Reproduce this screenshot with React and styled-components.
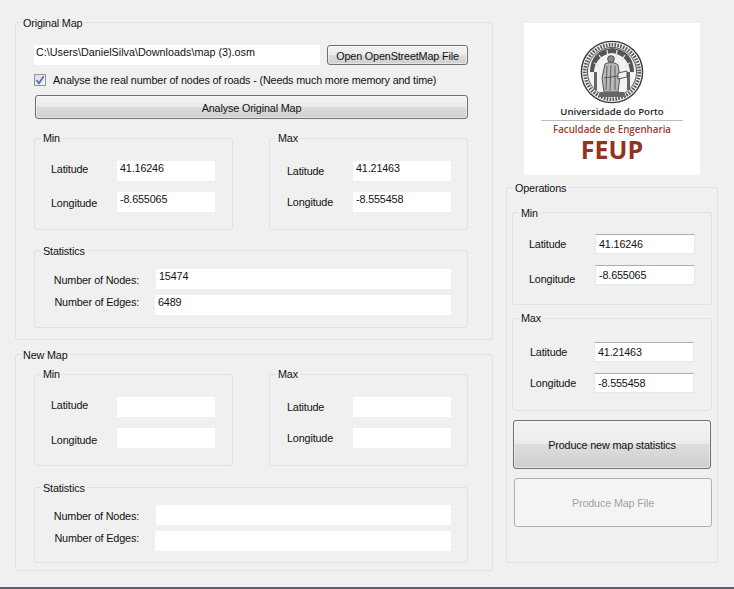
import React from "react";
import styled, { createGlobalStyle } from "styled-components";

const GlobalStyle = createGlobalStyle`
  html, body {
    margin: 0;
    padding: 0;
    background: #f0f0f0;
  }
  * {
    box-sizing: border-box;
  }
`;

const Seal = () => (
  <SealSvg viewBox="0 0 64 64">
    <circle cx="32" cy="32" r="30.6" fill="#f4f4f4" stroke="#3a3a3a" strokeWidth="1.4" />
    <circle cx="32" cy="32" r="27.2" fill="none" stroke="#555" strokeWidth="3.6" strokeDasharray="1.6 1.3" />
    <circle cx="32" cy="32" r="24.6" fill="#f2f2f2" stroke="#444" strokeWidth="0.9" />
    <path d="M10 32 C10 18 18 9 32 8 C46 9 54 18 54 32 L50 32 C50 23 43 14 32 13 C21 14 14 23 14 32 Z" fill="#555" />
    <path d="M14 23 L19 26 M19 15 L23 21 M27 10 L28 17 M37 10 L36 17 M45 15 L41 21 M50 23 L45 26" stroke="#e4e4e4" strokeWidth="1.3" />
    <path d="M14 32 H17 V50 H14 Z M47 32 H50 V50 H47 Z" fill="#666" />
    <circle cx="31" cy="19" r="3.4" fill="#8a8a8a" stroke="#333" strokeWidth="0.7" />
    <path d="M25 24 C28 22 35 22 38 25 L40 36 L38 52 L24 52 L22 38 Z" fill="#b8b8b8" stroke="#333" strokeWidth="0.8" />
    <path d="M27 26 L26 50 M31 25 L30 51 M35 26 L35 50 M24 38 L38 36" stroke="#444" strokeWidth="0.8" />
    <path d="M38 33 L47 31 L47 37 L38 39 Z" fill="#f2f2f2" stroke="#333" strokeWidth="0.8" />
    <path d="M20 52 H44 L46 57 H18 Z" fill="#666" />
  </SealSvg>
);

const Logo = () => (
  <LogoBox>
    <Seal />
    <LogoTitle>Universidade do Porto</LogoTitle>
    <LogoRule />
    <LogoFaculty>Faculdade de Engenharia</LogoFaculty>
    <LogoFeup>FEUP</LogoFeup>
  </LogoBox>
);

// dy values: the labels don't sit at the same height in every box
const CoordBox = ({ title, width = 199, height = 92, pad = 22, left = 16, labelW = 66, inputW = 98, sunken, lat, lon, latDy = 1, lonDy = 4, legendTop = -8 }) => (
  <Group $w={width} $h={height} $pad={pad}>
    <Legend $top={legendTop}>{title}</Legend>
    <CoordRows $left={left}>
      <CoordRow>
        <FieldLabel $w={labelW} $dy={latDy}>Latitude</FieldLabel>
        <Field $w={inputW} $sunken={sunken} readOnly value={lat} />
      </CoordRow>
      <CoordRow>
        <FieldLabel $w={labelW} $dy={lonDy}>Longitude</FieldLabel>
        <Field $w={inputW} $sunken={sunken} readOnly value={lon} />
      </CoordRow>
    </CoordRows>
  </Group>
);

const StatsBox = ({ height, pad, top, nodes, edges }) => (
  <StatsGroup $w={434} $h={height} $pad={pad} $top={top}>
    <Legend $top={-7}>Statistics</Legend>
    <StatRows>
      <StatRow>
        <StatLabel $w={121} $right={17} $dy={4}>Number of Nodes:</StatLabel>
        <Field $w={295} readOnly value={nodes} />
      </StatRow>
      <StatRow>
        <StatLabel $w={120} $right={16} $dy={0}>Number of Edges:</StatLabel>
        <Field $w={296} readOnly value={edges} />
      </StatRow>
    </StatRows>
  </StatsGroup>
);

export default function App() {
  return (
    <Page>
      <GlobalStyle />
      <LeftColumn>
        <Group $w={478} $h={318} $pad={22}>
          <Legend $top={-7} $left={5}>Original Map</Legend>
          <FileRow>
            <PathField $w={286} readOnly value="C:\Users\DanielSilva\Downloads\map (3).osm" />
            <SmallButton>Open OpenStreetMap File</SmallButton>
          </FileRow>
          <CheckRow>
            <CheckBox>
              <svg width="10" height="10" viewBox="0 0 10 10">
                <path d="M1.5 5 L4 8.2 L8.6 1.2" fill="none" stroke="#5a6ea6" strokeWidth="1.7" />
              </svg>
            </CheckBox>
            <CheckLabel>Analyse the real number of nodes of roads - (Needs much more memory and time)</CheckLabel>
          </CheckRow>
          <WideButton>Analyse Original Map</WideButton>
          <CoordPair $top={19}>
            <CoordBox title="Min" lat="41.16246" lon="-8.655065" />
            <CoordBox title="Max" lat="41.21463" lon="-8.555458" latDy={3} lonDy={3} left={17} />
          </CoordPair>
          <StatsBox height={78} pad={18} top={20} nodes="15474" edges="6489" />
        </Group>
        <Group $w={478} $h={217} $pad={19}>
          <Legend $top={-7} $left={5}>New Map</Legend>
          <CoordPair $top={0}>
            <CoordBox title="Min" lat="" lon="" latDy={1} lonDy={5} />
            <CoordBox title="Max" lat="" lon="" latDy={3} lonDy={3} left={17} />
          </CoordPair>
          <StatsBox height={76} pad={17} top={21} nodes="" edges="" />
        </Group>
      </LeftColumn>
      <RightColumn>
        <Logo />
        <OperationsGroup $w={212} $h={376} $pad={24}>
          <Legend $top={-7}>Operations</Legend>
          <CoordBox title="Min" legendTop={-7} width={200} height={93} pad={21} inputW={100} sunken lat="41.16246" lon="-8.655065" latDy={3} lonDy={7} />
          <CoordBox title="Max" width={200} height={93} pad={23} left={17} labelW={64} inputW={100} sunken lat="41.21463" lon="-8.555458" latDy={3} lonDy={3} />
          <BigButton>Produce new map statistics</BigButton>
          <DisabledButton disabled>Produce Map File</DisabledButton>
        </OperationsGroup>
      </RightColumn>
    </Page>
  );
}

const Page = styled.div`
  width: 734px;
  height: 589px;
  padding: 22px 0 0 15px;
  display: flex;
  gap: 13px;
  align-items: flex-start;
  background: #f0f0f0;
  border-bottom: 2px solid #5f5e68;
  font-family: "Liberation Sans", Arial, sans-serif;
  font-size: 10.8px;
  letter-spacing: -0.15px;
  color: #111;
  overflow: hidden;
`;

const LeftColumn = styled.div`
  display: flex;
  flex-direction: column;
  gap: 14px;
`;

const RightColumn = styled.div`
  display: flex;
  flex-direction: column;
  margin-top: 1px;
`;

const Group = styled.div`
  position: relative;
  width: ${(p) => p.$w}px;
  height: ${(p) => p.$h}px;
  padding-top: ${(p) => p.$pad}px;
  border: 1px solid #d9e3ea;
  border-radius: 3px;
`;

const StatsGroup = styled(Group)`
  margin: ${(p) => p.$top}px 0 0 18px;
`;

const OperationsGroup = styled(Group)`
  margin-top: 12px;
  padding-left: 5px;
  & > div + div {
    margin-top: 13px;
  }
`;

const Legend = styled.span`
  position: absolute;
  top: ${(p) => p.$top}px;
  left: ${(p) => p.$left ?? 6}px;
  padding: 0 2px;
  line-height: 14px;
  background: #f0f0f0;
  white-space: nowrap;
`;

const FileRow = styled.div`
  display: flex;
  gap: 7px;
  margin-left: 18px;
`;

const Field = styled.input`
  display: block;
  width: ${(p) => p.$w}px;
  height: 20px;
  padding: 0 0 ${(p) => (p.$sunken ? 1 : 7)}px 3px;
  background: #fff;
  border: ${(p) => (p.$sunken ? "1px solid #e3e9ef" : "0")};
  border-top-color: #abadb3;
  outline: none;
  border-radius: 0;
  font: inherit;
  letter-spacing: inherit;
  color: #111;
`;

const PathField = styled(Field)`
  padding-left: 2px;
  letter-spacing: 0;
`;

const ButtonBase = styled.button`
  padding: 1px 0 0;
  border: 1px solid #707070;
  border-radius: 3px;
  background: linear-gradient(#f2f2f2, #ebebeb 48%, #dddddd 50%, #cfcfcf);
  box-shadow: inset 0 0 0 1px rgba(255, 255, 255, 0.45);
  font: inherit;
  letter-spacing: inherit;
  color: #111;
  white-space: nowrap;
`;

const SmallButton = styled(ButtonBase)`
  width: 141px;
  height: 20px;
`;

const WideButton = styled(ButtonBase)`
  display: block;
  width: 433px;
  height: 24px;
  margin: 9px 0 0 19px;
`;

const BigButton = styled(ButtonBase)`
  display: block;
  width: 198px;
  height: 49px;
  margin: 9px 0 0 1px;
`;

const DisabledButton = styled(BigButton)`
  margin: 9px 0 0 2px;
  border-color: #adb2b5;
  background: #f4f4f4;
  box-shadow: none;
  color: #a3a3a3;
`;

const CheckRow = styled.div`
  display: flex;
  align-items: center;
  gap: 7px;
  margin: 9px 0 0 18px;
  height: 12px;
`;

const CheckBox = styled.span`
  display: flex;
  align-items: center;
  justify-content: center;
  width: 12px;
  height: 12px;
  border: 1px solid #969696;
  background: linear-gradient(135deg, #d5dceb, #f3f5fa);
`;

const CheckLabel = styled.span`
  line-height: 14px;
  white-space: nowrap;
`;

const CoordPair = styled.div`
  display: flex;
  gap: 36px;
  margin: ${(p) => p.$top}px 0 0 18px;
`;

const CoordRows = styled.div`
  display: flex;
  flex-direction: column;
  gap: 11px;
  padding-left: ${(p) => p.$left}px;
`;

const CoordRow = styled.div`
  display: flex;
  height: 20px;
`;

const FieldLabel = styled.label`
  width: ${(p) => p.$w}px;
  padding-top: ${(p) => p.$dy}px;
  line-height: 14px;
  white-space: nowrap;
`;

const StatRows = styled.div`
  display: flex;
  flex-direction: column;
  gap: 6px;
`;

const StatRow = styled.div`
  display: flex;
  height: 20px;
`;

const StatLabel = styled(FieldLabel)`
  padding-right: ${(p) => p.$right}px;
  text-align: right;
`;

const LogoBox = styled.div`
  display: flex;
  flex-direction: column;
  align-items: center;
  width: 176px;
  height: 152px;
  margin-left: 18px;
  padding-top: 17px;
  background: #fff;
  font-family: "Open Sans", "Liberation Sans", sans-serif;
  letter-spacing: 0;
`;

const SealSvg = styled.svg`
  display: block;
  flex: none;
  width: 64px;
  height: 64px;
  filter: blur(0.3px);
`;

const LogoTitle = styled.div`
  margin-top: 1px;
  font-size: 9.6px;
  line-height: 14px;
  font-weight: 600;
  color: #1f1f1f;
  white-space: nowrap;
`;

const LogoRule = styled.div`
  flex: none;
  width: 142px;
  height: 1px;
  margin-top: 1px;
  background: #bdbdbd;
`;

const LogoFaculty = styled.div`
  margin-top: 2px;
  font-size: 9.75px;
  line-height: 14px;
  font-weight: 600;
  color: #9c4030;
  white-space: nowrap;
`;

const LogoFeup = styled.div`
  font-size: 25px;
  line-height: 24px;
  font-weight: 700;
  color: #93331f;
`;
